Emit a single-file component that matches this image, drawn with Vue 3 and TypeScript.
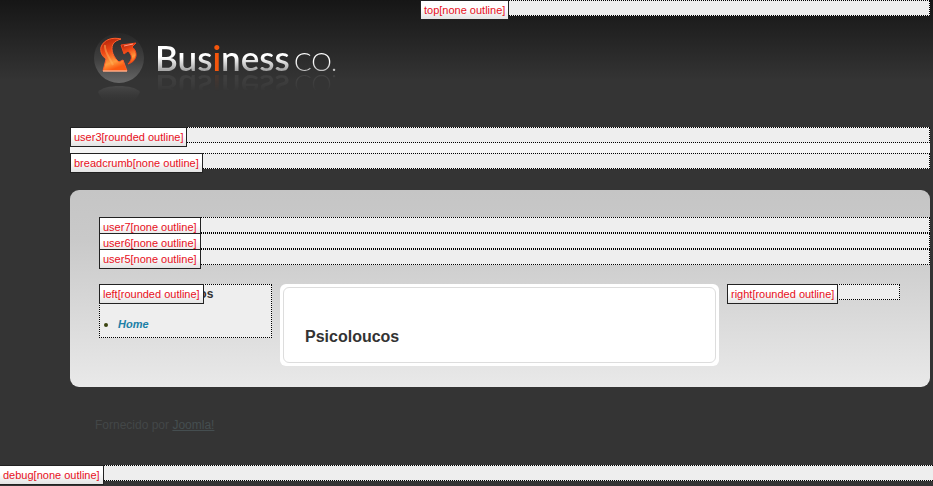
<script setup lang="ts">
interface Slot {
  name: string
  chrome: 'none' | 'rounded'
}

const navSlots: Slot[] = [
  { name: 'user3', chrome: 'rounded' },
  { name: 'breadcrumb', chrome: 'none' },
]

const userSlots: Slot[] = [
  { name: 'user7', chrome: 'none' },
  { name: 'user6', chrome: 'none' },
  { name: 'user5', chrome: 'none' },
]
</script>

<template>
  <div class="page">
    <div class="wrap">
      <header class="header">
        <div class="slot top-slot"><span class="tag">top[none outline]</span></div>
        <a class="brand" href="#" aria-label="Business co.">
          <svg class="emblem" width="60" height="76" viewBox="0 0 60 76" aria-hidden="true">
            <defs>
              <linearGradient id="disc" x1="0" y1="0" x2="0" y2="1">
                <stop offset="0" stop-color="#272727" />
                <stop offset="0.55" stop-color="#414141" />
                <stop offset="1" stop-color="#686868" />
              </linearGradient>
              <linearGradient id="flame" x1="0" y1="0" x2="0.3" y2="1">
                <stop offset="0" stop-color="#a81c08" />
                <stop offset="0.45" stop-color="#f04a16" />
                <stop offset="0.8" stop-color="#ff9a3c" />
                <stop offset="1" stop-color="#fb5a12" />
              </linearGradient>
              <linearGradient id="mirror" x1="0" y1="0" x2="0" y2="1">
                <stop offset="0" stop-color="#666" stop-opacity="0.4" />
                <stop offset="0.8" stop-color="#444" stop-opacity="0" />
              </linearGradient>
            </defs>
            <circle cx="29" cy="28" r="25" fill="url(#disc)" />
            <path d="M8 62C14 54 44 54 50 62C47 70 39 75 29 75C19 75 11 70 8 62Z" fill="url(#mirror)" />
            <path
              d="M31 9C23 7 14 9 11 17C10 22 12 26 16 29L13 41H37L33 30L29 32C24 28 20 20 23 14C25 11 28 10 31 9Z"
              fill="url(#flame)" stroke="#ff5f2c" stroke-width="1" stroke-linejoin="round"
            />
            <path d="M13 41H37" fill="none" stroke="#ffd0b0" stroke-width="1" />
            <path d="M15 15C14 21 19 27 23 35" fill="none" stroke="#ffb25c" stroke-width="2" opacity="0.5" />
            <path
              d="M31 15L46 13L42 17C48 21 48 31 38 34C43 29 42 25 38 21L34 24Z"
              fill="url(#flame)" stroke="#f4471c" stroke-width="1" stroke-linejoin="round"
            />
            <path d="M34 16L43 14" fill="none" stroke="#ff9a80" stroke-width="1" />
          </svg>
          <span class="word"><span class="silver">Bus</span><span class="accent">i</span><span class="silver">ness</span><span class="silver thin">CO.</span></span>
        </a>
      </header>

      <nav class="nav">
        <div v-for="s in navSlots" :key="s.name" class="slot">
          <span class="tag">{{ s.name }}[{{ s.chrome }} outline]</span>
        </div>
      </nav>

      <main class="panel">
        <div class="users">
          <div v-for="s in userSlots" :key="s.name" class="slot">
            <span class="tag">{{ s.name }}[{{ s.chrome }} outline]</span>
          </div>
        </div>
        <div class="columns">
          <aside class="slot left">
            <span class="tag">left[rounded outline]</span>
            <h3>Menu Psicoloucos</h3>
            <ul>
              <li><a href="#">Home</a></li>
            </ul>
          </aside>
          <section class="content">
            <div class="content-inner"><h1>Psicoloucos</h1></div>
          </section>
          <aside class="slot right"><span class="tag">right[rounded outline]</span></aside>
        </div>
      </main>

      <footer class="footer">Fornecido por <a href="#">Joomla!</a></footer>
    </div>
    <div class="slot debug"><span class="tag">debug[none outline]</span></div>
  </div>
</template>

<style>
body {
  background: #343434;
}
</style>

<style scoped>
.page {
  box-sizing: border-box;
  overflow: hidden;
  padding-bottom: 5px;
  background: linear-gradient(#161616, #343434 80px);
  color: #333;
  font-family: "Liberation Sans", Arial, sans-serif;
  font-size: 12px;
}
.wrap {
  margin: 0 3px 0 70px;
}
.slot {
  position: relative;
  box-sizing: border-box;
  min-height: 16px;
  border: 1px dotted #000;
  background: #eee;
}
.tag {
  position: absolute;
  z-index: 1;
  top: -1px;
  left: -1px;
  box-sizing: border-box;
  height: 20px;
  padding: 0 3px;
  border: 1px solid #222;
  background: linear-gradient(#fff 40%, #e4e4e4);
  color: #e8101c;
  font-size: 11px;
  line-height: 19px;
  white-space: nowrap;
}
.header {
  display: flex;
  flex-direction: column;
  height: 127px;
}
.top-slot {
  align-self: flex-end;
  width: calc(100% - 350px);
}
.brand {
  display: flex;
  align-items: flex-start;
  gap: 5px;
  margin: 14px 0 0 20px;
  text-decoration: none;
}
.emblem {
  flex: none;
}
.word {
  display: flex;
  align-items: baseline;
  height: 40px;
  margin-top: 7px;
  font-family: Lato, "Open Sans", sans-serif;
  font-size: 35px;
  font-weight: 600;
  line-height: 40px;
  white-space: nowrap;
  -webkit-box-reflect: below -8px linear-gradient(transparent 45%, rgba(255, 255, 255, 0.15));
}
.silver {
  background: linear-gradient(#fff 50%, #a8a8a8 82%);
  background-clip: text;
  color: transparent;
}
.accent {
  color: #f4560c;
}
.thin {
  margin-left: 4px;
  font-size: 26px;
  font-weight: 300;
}
.nav {
  display: flex;
  flex-direction: column;
  gap: 10px;
  background: #f4f4f4;
}
.panel {
  margin-top: 21px;
  padding: 27px 0 21px 29px;
  border-radius: 9px;
  background: linear-gradient(#c5c5c5, #c9c9c9 25%, #e9e9e9);
}
.columns {
  display: grid;
  grid-template-columns: 173px 1fr 173px;
  gap: 8px;
  align-items: start;
  margin: 19px 30px 0 0;
}
.left {
  height: 54px;
}
.left h3 {
  margin: 0;
  padding-left: 8px;
  font-size: 12px;
  line-height: 18px;
}
.left ul {
  margin: 12px 0 0;
  padding-left: 18px;
  color: #3b4410;
  line-height: 18px;
}
.left a {
  color: #1b7fa6;
  font-size: 11px;
  font-style: italic;
  font-weight: bold;
  text-decoration: none;
}
.content {
  padding: 3px;
  border-radius: 6px;
  background: #fff;
}
.content-inner {
  padding: 39px 21px 15px;
  border: 1px solid #ddd;
  border-radius: 6px;
}
.content h1 {
  margin: 0;
  font-size: 16px;
  line-height: 20px;
}
.footer {
  padding: 29px 25px 31px;
  color: #434748;
  line-height: 18px;
}
.footer a {
  color: #454e50;
}
.debug {
  border-left: 0;
  border-right: 0;
}
.debug .tag {
  left: 0;
  border-left: 0;
}
</style>
